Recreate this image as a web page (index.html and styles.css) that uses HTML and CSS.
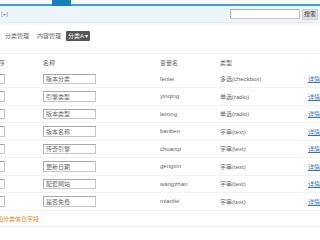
FILE: index.html
```html
<!DOCTYPE html>
<html lang="zh">
<head>
<meta charset="utf-8">
<title>分类管理</title>
<link rel="stylesheet" href="styles.css">
</head>
<body>
<div class="page">
  <div class="topnav"><span class="navtab"></span></div>
  <div class="toolbar">
    <span class="plus">[+]</span>
    <div class="search">
      <input class="search-input" type="text">
      <button class="search-btn" type="button">搜索</button>
    </div>
  </div>
  <div class="tabs">
    <a class="tab">分类管理</a>
    <a class="tab">内容管理</a>
    <a class="tab tab-active">分类A<span class="caret">▾</span></a>
  </div>
  <div class="table">
    <div class="row head">
      <div class="c-seq">排序</div><div>名称</div><div>变量名</div><div>类型</div><div></div>
    </div>
    <div class="row"><div class="c-input"><input class="seq" type="text"></div><div><input class="name" type="text" value="版本分类"></div><div>fenlei</div><div>多选(checkbox)</div><div><a class="link">详情</a></div></div>
    <div class="row"><div class="c-input"><input class="seq" type="text"></div><div><input class="name" type="text" value="引擎类型"></div><div>yinqing</div><div>单选(radio)</div><div><a class="link">详情</a></div></div>
    <div class="row"><div class="c-input"><input class="seq" type="text"></div><div><input class="name" type="text" value="版本类型"></div><div>leixing</div><div>单选(radio)</div><div><a class="link">详情</a></div></div>
    <div class="row"><div class="c-input"><input class="seq" type="text"></div><div><input class="name" type="text" value="版本名称"></div><div>banben</div><div>字串(text)</div><div><a class="link">详情</a></div></div>
    <div class="row"><div class="c-input"><input class="seq" type="text"></div><div><input class="name" type="text" value="传奇引擎"></div><div>chuanqi</div><div>字串(text)</div><div><a class="link">详情</a></div></div>
    <div class="row"><div class="c-input"><input class="seq" type="text"></div><div><input class="name" type="text" value="更新日期"></div><div>gengxin</div><div>字串(text)</div><div><a class="link">详情</a></div></div>
    <div class="row"><div class="c-input"><input class="seq" type="text"></div><div><input class="name" type="text" value="配套网站"></div><div>wangzhan</div><div>字串(text)</div><div><a class="link">详情</a></div></div>
    <div class="row"><div class="c-input"><input class="seq" type="text"></div><div><input class="name" type="text" value="是否免费"></div><div>mianfei</div><div>字串(text)</div><div><a class="link">详情</a></div></div>
    <div class="row add"><a class="addlink">添加分类信息字段</a></div>
  </div>
</div>
</body>
</html>
```
FILE: styles.css
```css
html, body {
  margin: 0;
  padding: 0;
  background: #fff;
  overflow: hidden;
}
body {
  width: 320px;
  height: 240px;
  font-family: "Liberation Sans", "Noto Sans CJK SC", sans-serif;
  font-size: 6px;
  color: #666;
}
.page {
  width: 320px;
}
.topnav {
  height: 4px;
  background: #f5f9fc;
  border-bottom: 2px solid #36a3d6;
  display: flex;
  padding-left: 52px;
}
.navtab {
  width: 19px;
  height: 6px;
  background: #1b7fb6;
}
.toolbar {
  height: 16px;
  background: #eef5fa;
  border-bottom: 1px solid #e2eaf0;
  box-shadow: 0 1px 2px rgba(0,0,0,0.05);
  display: flex;
  align-items: center;
  justify-content: space-between;
  padding: 0 2px 0 1px;
}
.plus {
  color: #6f8299;
  font-size: 6px;
  line-height: 8px;
}
.search {
  display: flex;
  align-items: center;
  gap: 2px;
}
.search-input {
  width: 70px;
  height: 10px;
  box-sizing: border-box;
  border: 1px solid #c8c8c8;
  border-top-color: #a9a9a9;
  border-left-color: #b2b2b2;
  background: #fff;
  padding: 0;
  margin: 0;
}
.search-btn {
  width: 16px;
  height: 11px;
  box-sizing: border-box;
  border: 1px solid #cfcfcf;
  background: #e0e0e0;
  color: #333;
  font-family: "Liberation Sans", "Noto Sans CJK SC", sans-serif;
  font-size: 6px;
  padding: 0;
  margin: 0;
  line-height: 9px;
}
.tabs {
  display: flex;
  align-items: center;
  height: 10px;
  margin: 8px 0 12px 5px;
  gap: 8px;
}
.tab {
  color: #666;
  line-height: 10px;
}
.tab-active {
  background: #555;
  color: #fff;
  padding: 0 2px;
  border-radius: 1px;
  margin-left: -3px;
}
.caret {
  font-size: 6px;
  margin-left: 1px;
}
.table {
  border-top: 1px solid #f0f0f0;
  margin-left: -20px;
}
.row {
  display: grid;
  grid-template-columns: 63px 117px 60px 88px 40px;
  align-items: center;
  height: 17.5px;
  box-sizing: border-box;
  border-bottom: 1px solid #f2f2f2;
}
.row.head {
  height: 16.5px;
  border-bottom: none;
  color: #666;
}
.c-seq {
  padding-left: 13px;
}
.c-input {
  display: flex;
}
input.seq, input.name {
  height: 10.5px;
  box-sizing: border-box;
  border: 1px solid #c6c6c6;
  border-top-color: #a8a8a8;
  border-left-color: #b0b0b0;
  padding: 0 2px;
  margin: 0;
  font-family: "Liberation Sans", "Noto Sans CJK SC", sans-serif;
  font-size: 6px;
  color: #666;
  background: #fff;
}
input.seq {
  width: 20px;
  margin-left: 4.5px;
}
input.name {
  width: 53px;
}
.link {
  color: #3574b0;
  text-decoration: underline;
}
.row.add {
  display: flex;
  align-items: center;
  height: 16.5px;
  padding-left: 11px;
  border-bottom: 1px solid #eee;
}
.addlink {
  color: #e0892c;
}
```
